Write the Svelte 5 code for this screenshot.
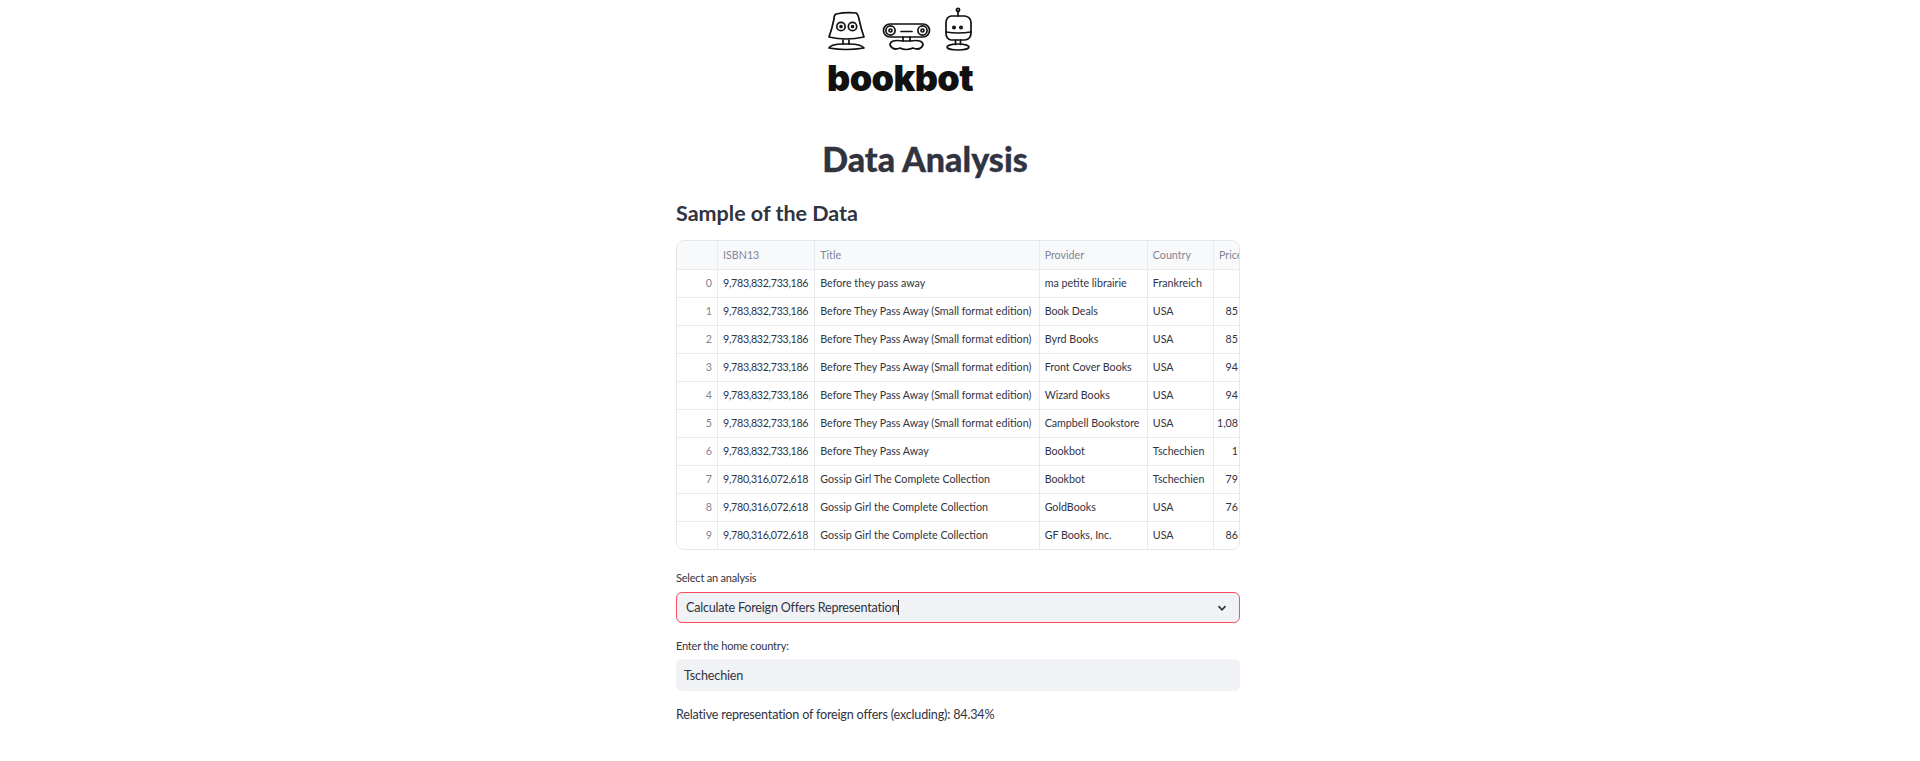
<script>
    const columns = ["ISBN13", "Title", "Provider", "Country", "Price"];
    const small = "Before They Pass Away (Small format edition)";
    const gossip = "Gossip Girl the Complete Collection";
    const rows = [
        ["9,783,832,733,186", "Before they pass away", "ma petite librairie", "Frankreich", ""],
        ["9,783,832,733,186", small, "Book Deals", "USA", "85"],
        ["9,783,832,733,186", small, "Byrd Books", "USA", "85"],
        ["9,783,832,733,186", small, "Front Cover Books", "USA", "94"],
        ["9,783,832,733,186", small, "Wizard Books", "USA", "94"],
        ["9,783,832,733,186", small, "Campbell Bookstore", "USA", "1,08"],
        ["9,783,832,733,186", "Before They Pass Away", "Bookbot", "Tschechien", "1"],
        ["9,780,316,072,618", "Gossip Girl The Complete Collection", "Bookbot", "Tschechien", "79"],
        ["9,780,316,072,618", gossip, "GoldBooks", "USA", "76"],
        ["9,780,316,072,618", gossip, "GF Books, Inc.", "USA", "86"]
    ];
</script>

<main class="page">
    <div class="logo">
        <svg class="bots" width="146" height="44" viewBox="0 0 146 44" fill="none" stroke="#111" stroke-width="1.7" stroke-linecap="round" stroke-linejoin="round">
            <!-- left bot -->
            <path d="M8 7 Q18 5 28 6 Q30 7 31 12 Q33 22 36 30 Q18 34 1 30 Q4 22 6 12 Q6 8 8 7Z" />
            <circle cx="13" cy="19.5" r="4.2" />
            <circle cx="13" cy="19.5" r="1" />
            <circle cx="24.5" cy="19.5" r="4.2" />
            <circle cx="24.5" cy="19.5" r="1" />
            <path d="M15 33 V37 H21 V33" />
            <path d="M15 37 Q3 37 1 41 Q18 44 36 41 Q33 37 21 37" />
            <!-- middle bot -->
            <path d="M62 17 H95 A6.5 6.5 0 0 1 95 30 H62 A6.5 6.5 0 0 1 62 17Z" />
            <circle cx="62.5" cy="23.5" r="4.6" />
            <circle cx="62.5" cy="23.5" r="1.5" />
            <circle cx="94.5" cy="23.5" r="4.6" />
            <circle cx="94.5" cy="23.5" r="1.5" />
            <path d="M73 24.5 H84" />
            <path d="M75 30 V34 H82 V30" />
            <path d="M75 34 Q62 32 62 38 Q65 44 72 41 Q78 44 85 41 Q92 44 95 38 Q95 32 82 34" />
            <!-- right bot -->
            <path d="M130 4 V9" />
            <circle cx="130" cy="3" r="1.6" />
            <path d="M123 9 H137 Q143 10 143 16 V26 Q143 32 137 33 H123 Q118 32 118 26 V16 Q118 10 123 9Z" />
            <path d="M118 25 Q130 27 143 25" />
            <circle cx="126" cy="20.5" r="1.2" />
            <circle cx="133" cy="20.5" r="1.2" />
            <path d="M127.5 33 V37.5 M132.5 33 V37.5" />
            <ellipse cx="130" cy="40" rx="11" ry="3" />
        </svg>
        <div class="wordmark">bookbot</div>
    </div>

    <h1>Data Analysis</h1>
    <h3>Sample of the Data</h3>

    <div class="frame">
        <table>
            <thead>
                <tr>
                    <th class="idx"></th>
                    {#each columns as col, i}
                        <th class={"c" + i}>{col}</th>
                    {/each}
                </tr>
            </thead>
            <tbody>
                {#each rows as row, r}
                    <tr>
                        <td class="idx">{r}</td>
                        {#each row as cell, i}
                            <td class={"c" + i}>{cell}</td>
                        {/each}
                    </tr>
                {/each}
            </tbody>
        </table>
    </div>

    <div class="label first">Select an analysis</div>
    <div class="select">
        <span class="value">Calculate Foreign Offers Representation</span><span class="caret"></span>
        <svg class="chevron" width="12" height="12" viewBox="0 0 12 12" fill="none" stroke="#31333f" stroke-width="1.7">
            <path d="M2.5 4.2 L6 7.8 L9.5 4.2" />
        </svg>
    </div>

    <div class="label second">Enter the home country:</div>
    <div class="input">Tschechien</div>

    <p class="result">Relative representation of foreign offers (excluding): 84.34%</p>
</main>

<style>
    :global(body){
        margin: 0;
        background: #fff;
    }

    .page{
        width: 564px;
        height: 761px;
        /* the column sits 2px left of the window's centre */
        margin: 0 auto;
        padding-right: 4px;
        font-family: 'Lato', 'Noto Sans', sans-serif;
        color: #31333f;
        overflow: hidden;
    }

    .logo{
        margin-left: 152px;
        padding-top: 7px;
    }

    .bots{
        display: block;
    }

    .wordmark{
        font-family: 'Inter', sans-serif;
        font-weight: 900;
        font-size: 36px;
        line-height: 36px;
        letter-spacing: -0.6px;
        color: #111;
        margin: 9px 0 0 -1px;
    }

    h1{
        margin: 41px 0 0;
        padding-right: 66px;
        text-align: center;
        font-size: 34px;
        line-height: 44px;
        font-weight: 900;
        -webkit-text-stroke: 0.3px #31333f;
    }

    h3{
        margin: 17px 0 0;
        font-size: 21.5px;
        line-height: 30px;
        font-weight: 700;
    }

    .frame{
        margin-top: 12px;
        border: 1px solid #e6e7ea;
        border-radius: 8px;
        overflow: hidden;
        height: 308px;
    }

    table{
        border-collapse: collapse;
        table-layout: fixed;
        width: 562px;
        font-size: 10.7px;
    }

    tr{
        height: 28px;
    }

    th, td{
        border-right: 1px solid #e9eaed;
        border-bottom: 1px solid #e9eaed;
        padding: 0 5px 1px;
        text-align: left;
        white-space: nowrap;
        overflow: hidden;
    }

    tbody tr:last-child td{
        border-bottom: none;
    }

    th{
        background: #f8f9fb;
        color: #808495;
        font-weight: 400;
    }

    .idx{
        width: 30px;
        text-align: right;
        color: #808495;
    }

    th.idx{
        background: #f8f9fb;
    }

    .c0{ width: 86px; }
    .c1{ width: 213px; }
    .c2{ width: 97px; }
    .c3{ width: 55px; }
    .c4{ width: 20px; border-right: none; }

    th.c4{
        padding-right: 0;
    }

    td.c0{
        letter-spacing: -0.3px;
    }

    td.c4{
        text-align: right;
        padding: 0 1px 1px 0;
    }

    .label{
        font-size: 11px;
        line-height: 16px;
        letter-spacing: -0.2px;
    }

    .first{
        margin-top: 20px;
    }

    .second{
        margin-top: 15px;
    }

    .select{
        display: flex;
        align-items: center;
        margin-top: 6px;
        height: 29px;
        padding: 0 9px;
        background: #f0f2f6;
        border: 1px solid #ff4b5f;
        border-radius: 6px;
        font-size: 12.6px;
        letter-spacing: -0.22px;
    }

    .caret{
        width: 1px;
        height: 15px;
        background: #31333f;
    }

    .chevron{
        margin-left: auto;
        margin-right: 2px;
    }

    .input{
        display: flex;
        align-items: center;
        margin-top: 5px;
        height: 32px;
        padding: 0 8px;
        background: #f0f2f6;
        border-radius: 6px;
        font-size: 12.6px;
        letter-spacing: -0.17px;
    }

    .result{
        margin: 14px 0 0;
        font-size: 12.6px;
        line-height: 20px;
        letter-spacing: -0.19px;
    }
</style>
